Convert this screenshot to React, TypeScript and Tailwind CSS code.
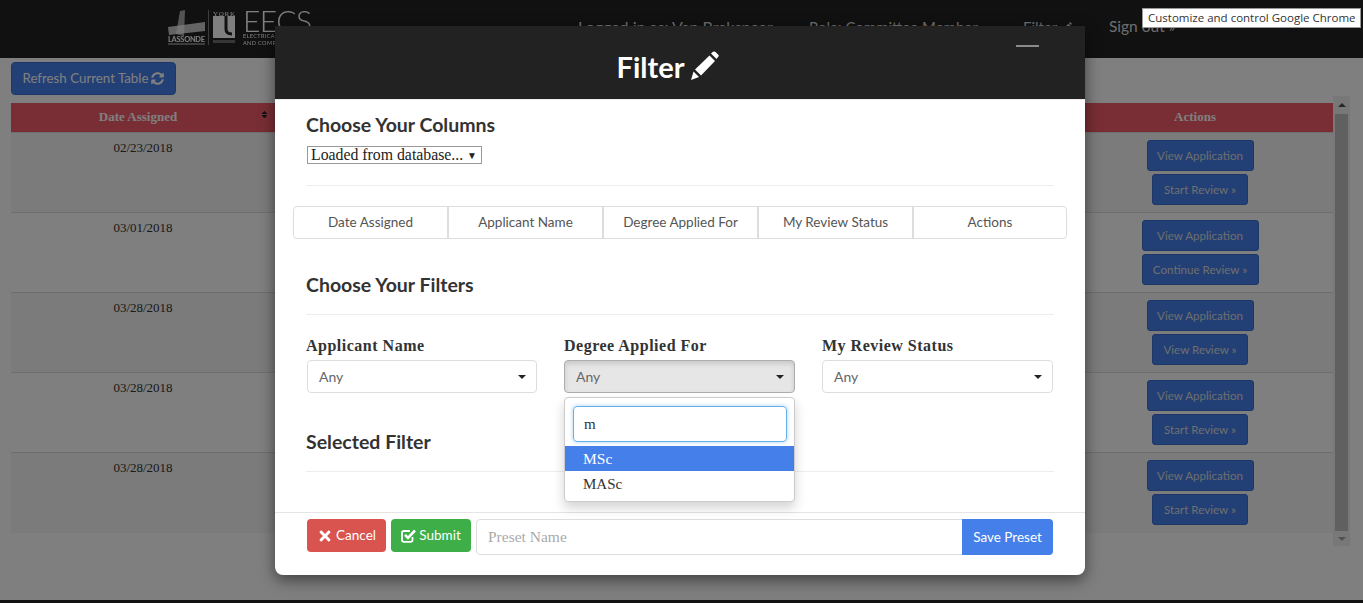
import React from 'react';
import { FaSyncAlt, FaTimes, FaSort } from 'react-icons/fa';

const sans = "font-['Lato',sans-serif]";
const serif = "font-['Liberation_Serif',serif]";

const rows = [
  { date: '02/23/2018', wide: false, second: 'Start Review »' },
  { date: '03/01/2018', wide: true, second: 'Continue Review »' },
  { date: '03/28/2018', wide: false, second: 'View Review »' },
  { date: '03/28/2018', wide: false, second: 'Start Review »' },
  { date: '03/28/2018', wide: false, second: 'Start Review »' },
];

const columns = ['Date Assigned', 'Applicant Name', 'Degree Applied For', 'My Review Status', 'Actions'];

const Caret = () => <span className="h-0 w-0 border-x-[4px] border-t-[4px] border-x-transparent border-t-[#222]" />;

const Pencil = ({ size }: { size: number }) => (
  <svg width={size} height={size} viewBox="0 0 28 29" fill="currentColor">
    <path d="M0.5 29 L3 20.5 L8.5 26 Z" />
    <path d="M4.5 18.5 L19 4.5 L24.5 10 L10.5 24.5 Z" />
    <path d="M20.5 2.5 L22.5 0.8 Q24 0 25 1 L28 4 Q28.6 5 27.5 6 L26 8 Z" />
  </svg>
);

const CheckSquare = () => (
  <svg width="15" height="15" viewBox="0 0 15 15" fill="none" stroke="currentColor">
    <path d="M11.5 9 V12 Q11.5 13.8 9.5 13.8 H3 Q1 13.8 1 12 V4.8 Q1 3 3 3 H9" strokeWidth="1.8" />
    <path d="M4 6.8 L7 9.8 L14 2.5" strokeWidth="2.6" />
  </svg>
);

const Logo = () => (
  <svg width="146" height="38" viewBox="0 0 146 38" className="blur-[0.3px]">
    <g fill="#fff">
      <path d="M0 17 L37 12 L37 21 L1 25 Z" opacity="0.75" />
      <path d="M8 24 L12 1 L17 0 L16 26 Z" opacity="0.6" />
      <text x="0" y="32" fontSize="7.4" fontWeight="700" fontFamily="Lato" textLength="37">LASSONDE</text>
      <rect x="0" y="33" width="37" height="2" opacity="0.4" />
      <rect x="40" y="0" width="0.8" height="35" opacity="0.5" />
      <text x="45" y="5.5" fontSize="7" fontFamily="Liberation Serif" textLength="22">YORK</text>
      <rect x="45" y="6" width="22" height="22" />
      <path d="M58 6 V19 Q58 24 64 24" fill="none" stroke="#222" strokeWidth="3" />
      <rect x="45" y="30" width="22" height="3" opacity="0.35" />
      <text x="75" y="22" fontSize="30" fontWeight="300" fontFamily="Lato" textLength="69">EECS</text>
      <text x="75" y="28" fontSize="5.5" fontFamily="Lato" letterSpacing="0.4">ELECTRICAL ENGINEERING</text>
      <text x="75" y="35" fontSize="5.5" fontFamily="Lato" letterSpacing="0.4">AND COMPUTER SCIENCE</text>
    </g>
  </svg>
);

const FilterSelect = ({ label, open, first }: { label: string; open?: boolean; first?: boolean }) => (
  <div className="w-[231px]">
    <div className={`${serif} mb-[4px] text-[16px] leading-[20px] font-bold tracking-[0.5px] text-[#333]`}>{label}</div>
    <div className={`flex h-[33px] items-center justify-between rounded-[4px] border pr-[10px] pl-[11px] text-[14px] text-[#666] ${first ? 'ml-px' : ''} ${open ? 'border-[#adadad] bg-[#e6e6e6] shadow-[inset_0_3px_5px_rgba(0,0,0,0.125)]' : 'border-[#ddd] bg-white'}`}>
      Any
      <Caret />
    </div>
  </div>
);

export default function App() {
  return (
    <div className={`${sans} relative flex h-[603px] w-[1363px] flex-col overflow-hidden bg-white`}>
      {/* page behind the modal */}
      <header className="flex h-[58px] shrink-0 items-center bg-[#222] pl-[168px] text-[16px] text-[#ddd]">
        <Logo />
        <span className="ml-[264px] w-[231px] whitespace-nowrap pb-[4px]">Logged in as: Van Brakspear</span>
        <span className="w-[214px] whitespace-nowrap pb-[4px] text-[15px]">Role: Committee Member</span>
        <span className="flex w-[86px] items-center gap-1 pb-[4px] text-[15px]">Filter <Pencil size={11} /></span>
        <span className="pb-[4px] text-[15.5px] whitespace-nowrap">Sign out »</span>
      </header>

      <main className="flex-1 pl-[11px]">
        <button className="mt-[4px] flex h-[33px] w-[165px] items-center justify-center gap-[3px] rounded-[4px] border border-[#3a70d0] bg-[#4580ea] text-[13.3px] text-white">
          Refresh Current Table <FaSyncAlt className="text-[13px]" />
        </button>

        <div className="mt-px flex h-[450px]">
          <div className="w-[1322px] pt-[7px]">
            <div className={`${serif} grid h-[30px] grid-cols-[254px_1fr_276px] items-center border-b border-[#ddd] bg-[#f25c6b] pb-[2px] text-[13px] font-bold text-white`}>
              <div className="relative text-center">
                Date Assigned
                <FaSort className="absolute top-[3px] -right-[4px] text-[9px] text-[#222]" />
              </div>
              <div />
              <div className="text-center">Actions</div>
            </div>
            {rows.map((row, i) => (
              <div key={i} className={`grid h-[80px] grid-cols-[254px_1fr_276px] border-b border-[#ddd] last:border-b-0 ${i % 2 === 0 ? 'bg-[#f7f7f7]' : 'bg-white'}`}>
                <div className={`${serif} pt-[7px] pl-[10px] text-center text-[13px] leading-[16px] text-[#333]`}>{row.date}</div>
                <div />
                <div className="flex flex-col items-center pt-[7px] pl-[10px] text-[11.6px] text-[#ddd]">
                  <button className={`h-[31px] rounded-[3px] border border-[#3a70d0] bg-[#4580ea] ${row.wide ? 'w-[117px]' : 'w-[107px]'}`}>View Application</button>
                  <button className={`mt-[3px] h-[31px] rounded-[3px] border border-[#3a70d0] bg-[#4580ea] ${row.wide ? 'w-[117px]' : 'w-[96px]'}`}>{row.second}</button>
                </div>
              </div>
            ))}
          </div>
          {/* scrollbar */}
          <div className="flex w-[17px] flex-col items-center bg-[#f1f1f1] px-[2px]">
            <div className="flex h-[18px] shrink-0 items-center justify-center">
              <span className="h-0 w-0 border-x-[4px] border-b-[4px] border-x-transparent border-b-[#505050]" />
            </div>
            <div className="h-[417px] w-full bg-[#c1c1c1]" />
            <div className="flex flex-1 items-center justify-center">
              <span className="h-0 w-0 border-x-[4px] border-t-[4px] border-x-transparent border-t-[#a3a3a3]" />
            </div>
          </div>
        </div>
      </main>

      <footer className="h-[3px] shrink-0 bg-[#222]" />

      {/* backdrop */}
      <div className="absolute inset-0 bg-black/50" />

      {/* modal */}
      <div className="absolute top-[26px] left-[275px] flex h-[549px] w-[810px] flex-col rounded-b-[8px] bg-white shadow-[0_5px_15px_rgba(0,0,0,0.5)]">
        <div className="relative flex h-[74px] shrink-0 items-center justify-center gap-[6px] border-b border-[#eee] bg-[#222] pt-[8px] pr-[24px] text-white">
          <span className="text-[29px] leading-none font-bold">Filter</span>
          <span className="mb-[3px]"><Pencil size={29} /></span>
          <span className="absolute top-[19px] right-[46px] h-[2px] w-[23px] bg-[#8a8a8a]" />
        </div>

        <div className="relative flex-1 px-[18px]">
          <div className="px-[13px]">
            <h2 className="mt-[14px] text-[19.5px] leading-[22px] font-bold text-[#333]">Choose Your Columns</h2>
            <div className={`${serif} mt-[10px] ml-px flex h-[18px] w-[175px] items-center justify-between border border-[#999] pr-[4px] pl-[3px] text-[15.8px] whitespace-nowrap text-[#222]`}>
              Loaded from database...
              <span className="text-[10px]">▼</span>
            </div>
            <hr className="mt-[21px] border-[#eee]" />
          </div>

          <div className="mt-[20px] flex h-[33px] w-[774px] rounded-[4px] border border-[#ddd]">
            {columns.map((c) => (
              <div key={c} className="flex w-[155px] items-center justify-center border-r-2 border-[#ddd] pb-[1px] text-[13.5px] text-[#555] last:flex-1 last:border-r-0">{c}</div>
            ))}
          </div>

          <div className="px-[13px]">
            <h2 className="mt-[35px] text-[19.5px] leading-[22px] font-bold text-[#333]">Choose Your Filters</h2>
            <hr className="mt-[18px] border-[#eee]" />
            <div className="mt-[21px] flex gap-[27px]">
              <FilterSelect label="Applicant Name" first />
              <FilterSelect label="Degree Applied For" open />
              <FilterSelect label="My Review Status" />
            </div>
            <h2 className="mt-[38px] text-[19.5px] leading-[22px] font-bold text-[#333]">Selected Filter</h2>
            <hr className="mt-[18px] border-[#eee]" />
          </div>

          {/* open dropdown */}
          <div className={`${serif} absolute top-[297px] left-[289px] h-[105px] w-[231px] rounded-[4px] border border-[#ccc] bg-white shadow-[0_6px_12px_rgba(0,0,0,0.175)]`}>
            <div className="pt-[8px] pr-[7px] pl-[8px]">
              <input defaultValue="m" className="h-[36px] w-full rounded-[4px] border border-[#66afe9] px-[10px] text-[15px] text-[#333] shadow-[0_0_4px_rgba(102,175,233,0.6)] outline-none" />
            </div>
            <div className="mt-[4px] flex h-[25px] items-center bg-[#4580ea] pl-[18px] text-[15.5px] text-white">MSc</div>
            <div className="flex h-[25px] items-center pt-[2px] pl-[18px] text-[15px] text-[#333]">MASc</div>
          </div>
        </div>

        <div className="flex h-[63px] shrink-0 items-start gap-[5px] border-t border-[#e5e5e5] pt-[6px] pr-[32px] pl-[32px]">
          <button className="flex h-[33px] w-[79px] items-center justify-center gap-[3px] rounded-[4px] bg-[#d9534f] text-[13.5px] text-white">
            <FaTimes className="text-[16px]" /> Cancel
          </button>
          <button className="flex h-[33px] w-[80px] items-center justify-center gap-[3px] rounded-[4px] bg-[#3dae48] text-[13.5px] text-white">
            <CheckSquare /> Submit
          </button>
          <div className="flex h-[36px] flex-1 rounded-[4px] border border-[#ddd]">
            <input placeholder="Preset Name" className={`${serif} min-w-0 flex-1 px-[11px] text-[15.5px] outline-none placeholder:text-[#aaa]`} />
            <button className="-my-px -mr-px w-[91px] rounded-r-[4px] bg-[#4580ea] text-[13.5px] text-white">Save Preset</button>
          </div>
        </div>
      </div>

      {/* chrome tooltip */}
      <div className="absolute top-[8px] left-[1142px] flex h-[20px] w-[219px] items-center border border-[#999] bg-white pl-[5px] font-['Open_Sans',sans-serif] text-[11.5px] whitespace-nowrap text-[#333]">
        Customize and control Google Chrome
      </div>
    </div>
  );
}
